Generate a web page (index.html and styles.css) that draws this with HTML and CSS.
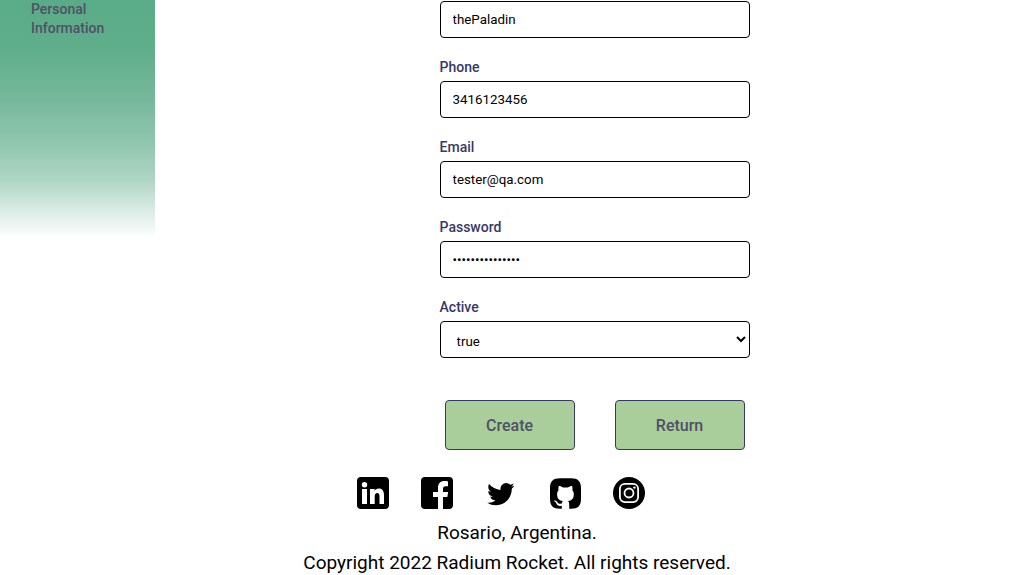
FILE: index.html
```html
<!DOCTYPE html>
<html lang="en">
<head>
  <meta charset="utf-8">
  <meta name="viewport" content="width=device-width, initial-scale=1">
  <title>Radium Rocket</title>
  <link rel="stylesheet" href="styles.css">
</head>
<body>
  <div class="layout">
    <aside class="sidebar">
      <nav><a class="sidebar-link" href="#personal">Personal Information</a></nav>
    </aside>
    <main class="content">
      <form class="form">
        <div class="field">
          <input class="control" type="text" aria-label="Name" value="thePaladin">
        </div>
        <div class="field">
          <label class="label" for="phone">Phone</label>
          <input class="control" id="phone" type="text" value="3416123456">
        </div>
        <div class="field">
          <label class="label" for="email">Email</label>
          <input class="control" id="email" type="text" value="tester@qa.com">
        </div>
        <div class="field">
          <label class="label" for="password">Password</label>
          <input class="control" id="password" type="password" value="password1234567">
        </div>
        <div class="field">
          <label class="label" for="active">Active</label>
          <select class="control select" id="active">
            <option selected>true</option>
            <option>false</option>
          </select>
        </div>
        <div class="actions">
          <button class="button" type="button">Create</button>
          <button class="button" type="button">Return</button>
        </div>
      </form>
    </main>
  </div>
  <footer class="footer">
    <div class="social">
      <a href="#linkedin" aria-label="LinkedIn"><svg class="icon" viewBox="0 0 32 32"><path fill-rule="evenodd" d="M4 0h24a4 4 0 0 1 4 4v24a4 4 0 0 1-4 4H4a4 4 0 0 1-4-4V4a4 4 0 0 1 4-4zM5 12v15h5V12zM7.500 5a2.700 2.700 0 1 0 0 5.400 2.700 2.700 0 0 0 0-5.400zM13 12v15h4.700v-7.500c0-2.100.8-3.500 2.500-3.500s2.300 1.300 2.300 3.500V27H27v-8.500c0-4.500-1.700-6.900-5.300-6.900-2 0-3.300.9-4.100 2.300V12z"/></svg></a>
      <a href="#facebook" aria-label="Facebook"><svg class="icon" viewBox="0 0 32 32"><path d="M4 0h24a4 4 0 0 1 4 4v24a4 4 0 0 1-4 4h-6V20h4.300l.9-5H22v-3c0-1.800.8-2.700 2.600-2.700H27V4.400c-.8-.2-2-.4-3.500-.4C19.400 4 17 6.500 17 10.800V15h-5v5h5v12H4a4 4 0 0 1-4-4V4a4 4 0 0 1 4-4z"/></svg></a>
      <a href="#twitter" aria-label="Twitter"><svg class="icon" viewBox="0 0 32 32"><g transform="translate(2.200 3.500) scale(1.140)"><path d="M23.950 4.570a10 10 0 0 1-2.820.78 4.960 4.960 0 0 0 2.160-2.730c-.95.56-2 .96-3.130 1.190a4.920 4.920 0 0 0-8.380 4.480C7.690 8.100 4.070 6.130 1.640 3.160a4.820 4.820 0 0 0-.67 2.480c0 1.710.87 3.210 2.190 4.100a4.900 4.900 0 0 1-2.230-.62v.06a4.920 4.920 0 0 0 3.950 4.830 5 5 0 0 1-2.210.08 4.940 4.940 0 0 0 4.600 3.420A9.870 9.870 0 0 1 0 19.540a14 14 0 0 0 7.550 2.210c9.050 0 14-7.500 14-13.980 0-.21 0-.42-.02-.63a9.900 9.900 0 0 0 2.420-2.570z"/></g></svg></a>
      <a href="#github" aria-label="GitHub"><svg class="icon" viewBox="0 0 32 32"><path d="M11 1.300h11c7 0 10 3 10 10v10.500c0 7-3 10-10 10H11c-7 0-10-3-10-10V11.300c0-7 3-10 10-10z"/><path fill="#fff" d="M12.800 32v-3.300c-2.800.6-4.400-.3-5.300-2-.6-1.200-1.200-1.900-2.100-2.400-.7-.5-.2-.9.500-.8 1.200 0 1.900.8 2.500 1.700 1.100 1.700 2.800 1.900 4.400 1.200.1-1 .5-1.800 1.100-2.300-3.800-.5-5.800-2.500-5.800-6.800 0-1.700.5-3 1.500-4-.3-1.100-.3-2.700.2-4.300 1.700 0 3 .7 4.300 1.600 1.500-.3 3.200-.3 4.700 0 1.300-.9 2.600-1.600 4.300-1.600.5 1.600.5 3.200.2 4.300 1 1 1.500 2.300 1.500 4 0 4.300-2 6.300-5.800 6.800.8.700 1.200 1.700 1.200 3V32z"/></svg></a>
      <a href="#instagram" aria-label="Instagram"><svg class="icon" viewBox="0 0 32 32"><circle cx="16" cy="16" r="16"/><g fill="none" stroke="#fff" stroke-width="1.800"><rect x="6.900" y="6.900" width="18.200" height="18.200" rx="5"/><circle cx="16" cy="16" r="4.500"/></g><circle cx="21.400" cy="10.600" r="1.200" fill="#fff"/></svg></a>
    </div>
    <p class="footer-text">Rosario, Argentina.</p>
    <p class="footer-text">Copyright 2022 Radium Rocket. All rights reserved.</p>
  </footer>
</body>
</html>
```
FILE: styles.css
```css
* {
  box-sizing: border-box;
}

body {
  margin: 0;
  background: #fff;
  color: #000;
  font-family: Roboto, sans-serif;
}

.layout {
  display: grid;
  grid-template-columns: 15% 1fr;
  align-items: start;
}

.sidebar {
  padding: 0 20% 200px;
  background: linear-gradient(#5aab87 0%, #5fae8b 20%, #77b89b 42%, #90c6ae 60%, #b0d6c5 76%, #d2e7df 86%, #fff 100%);
}

.sidebar-link {
  display: block;
  color: #505066;
  font-size: 14px;
  font-weight: 500;
  line-height: 19px;
  text-decoration: none;
}

.content {
  display: flex;
  justify-content: center;
  padding-top: 1px;
}

.form {
  display: flex;
  flex-direction: column;
  gap: 21px;
  width: 310px;
}

.field {
  display: flex;
  flex-direction: column;
  gap: 6px;
}

.label {
  color: #373867;
  font-size: 14px;
  font-weight: 500;
  line-height: 16px;
}

.control {
  width: 100%;
  height: 37px;
  padding: 0 12px;
  border: 1px solid #000;
  border-radius: 4px;
  background: #fff;
  color: #000;
  font-family: inherit;
}

.select {
  padding: 4px 0 0 12px;
}

.actions {
  display: flex;
  justify-content: space-between;
  padding: 21px 5px 0;
}

.button {
  width: 130px;
  height: 50px;
  border: 1px solid #373867;
  border-radius: 4px;
  background: #a9ce9b;
  color: #505066;
  font-family: inherit;
  font-size: 16px;
  font-weight: 500;
}

.footer {
  padding-top: 27px;
  text-align: center;
}

.social {
  display: flex;
  justify-content: center;
  gap: 32px;
  padding: 0 32px 9px 0;
}

.social a {
  color: #000;
}

.icon {
  display: block;
  width: 32px;
  height: 32px;
  fill: currentColor;
}

.footer-text {
  margin: 0;
  font-size: 19px;
  line-height: 30px;
}
```
